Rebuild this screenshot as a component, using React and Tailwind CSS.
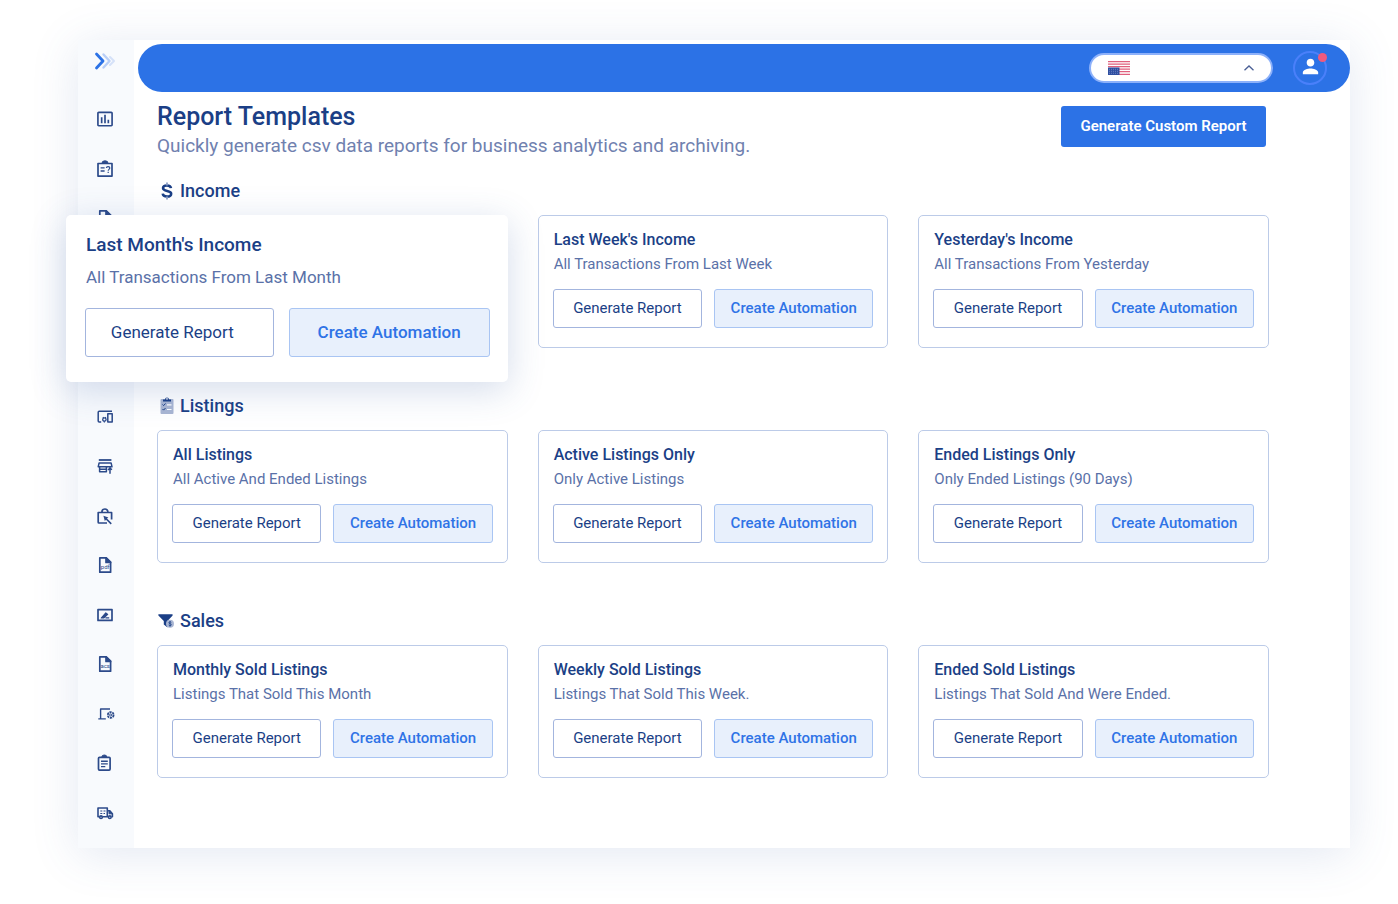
import React from "react";
import { MdInsertChartOutlined, MdPerson } from "react-icons/md";

const svgProps = {
  viewBox: "0 0 20 20",
  className: "size-5",
  fill: "none",
  stroke: "currentColor",
  strokeWidth: 1.7,
  strokeLinejoin: "round",
  "aria-hidden": true,
};

const ChartIcon = () => <MdInsertChartOutlined className="size-5" aria-hidden />;

const QuizIcon = () => (
  <svg {...svgProps}>
    <path d="M3 4.5h14v12.6H3z" />
    <path d="M7 4.2a3 2.4 0 0 1 6 0" fill="currentColor" strokeWidth="1" />
    <path d="M5.6 8.9h4M5.6 12h4" strokeWidth="1.4" />
    <path d="M11.4 9c.1-1.8 3.4-1.8 3.4.1 0 1.2-1.6 1.3-1.6 2.6M13.2 12.7v1.3" strokeWidth="1.2" />
  </svg>
);

const FileIcon = ({ label }) => (
  <svg {...svgProps}>
    <path d="M4.8 2.8h6.4l4.4 4.4v10H4.8z" />
    <path d="M11 2.8v4.6h4.6z" fill="currentColor" />
    {label ? (
      <text x="10.2" y="14" textAnchor="middle" fontSize="6" fontFamily="Roboto, sans-serif" fill="currentColor" stroke="none">
        {label}
      </text>
    ) : (
      <path d="M7.5 9.5h5M7.500 12h5" strokeWidth="1.2" />
    )}
  </svg>
);

const DevicesIcon = () => (
  <svg {...svgProps} strokeWidth="1.5">
    <path d="M17 5.200H4.200q-1 0-1 1v8.800q0 .9 1 .9h2" />
    <path d="M12.8 7.700h4.400v8.200h-4.400z" />
    <circle cx="9.400" cy="13.500" r="1.700" strokeWidth="1.300" />
    <path d="M8 11.200l.6.900M10.800 11.200l-.6.900M9.400 15.200v1.200" strokeWidth="1.200" />
  </svg>
);

const StoreIcon = () => (
  <svg {...svgProps} strokeWidth="1.500">
    <path d="M3.800 4h12.600" strokeWidth="1.800" />
    <path d="M4.100 6.900h12l.9 3.900H3.200z" />
    <path d="M4.600 10.800v5h6.800v-5M5 13.200h6" />
    <path d="M15 10.800v7M12.900 13.800l2.100-1.500 2 1.300" />
  </svg>
);

const BagIcon = () => (
  <svg {...svgProps}>
    <path d="M12 17H4q-.8 0-.8-.8V6.500h13.400v7" />
    <path d="M6.900 6.200a3 3.200 0 0 1 6 0" />
    <path d="M8.400 9.700l5 1.900-1.400 1 4.800 4.700-1.100 1.100-4.700-4.700-1.200 1.400z" fill="currentColor" stroke="none" />
  </svg>
);

const SignIcon = () => (
  <svg {...svgProps}>
    <path d="M3 4.600h14v10.800H3z" />
    <path d="M6.200 13l4.600-5.200 1.900 1.600L8.700 13zM10.500 12.900h3.700" fill="currentColor" strokeWidth="1.100" />
  </svg>
);

const LaptopIcon = () => (
  <svg {...svgProps} strokeWidth="1.400">
    <path d="M15 5H5.600v9.500M3.300 14.900h7.500" />
    <circle cx="15.700" cy="11" r="2.900" strokeWidth="1.800" strokeDasharray="2.300 .7" />
    <circle cx="15.700" cy="11" r="1.100" strokeWidth="1" />
  </svg>
);

const ClipboardIcon = () => (
  <svg {...svgProps}>
    <rect x="3.500" y="4.300" width="11.600" height="12.800" rx="1" />
    <path d="M6.800 4a2.500 2 0 0 1 5 0" fill="currentColor" strokeWidth="1" />
    <path d="M6 8.200h6.800M6 10.900h6.800M6 13.600h4.300" strokeWidth="1.400" />
  </svg>
);

const TruckIcon = () => (
  <svg {...svgProps} strokeWidth="1.600">
    <path d="M4.500 13.800H3V5h9.300v8.800H7.500M12.300 7.800h2.500l2.600 3v3h-1M11.800 13.800h1.500" />
    <path d="M14 8v2.800h3.200z" fill="currentColor" strokeWidth="1" />
    <path d="M5.300 8h2M8.500 8h2M5.300 10.500h2M8.500 10.500h1.500" strokeWidth="1" />
    <circle cx="6" cy="14.200" r="1.300" />
    <circle cx="14.800" cy="14.200" r="1.300" />
  </svg>
);

const navItems = [
  ["Overview", <ChartIcon />],
  ["Quizzes", <QuizIcon />],
  ["Documents", <FileIcon />],
  ["Signatures", <SignIcon />],
  ["Files", <FileIcon />],
  ["Lists", <ClipboardIcon />],
  ["Devices", <DevicesIcon />],
  ["Store", <StoreIcon />],
  ["Orders", <BagIcon />],
  ["PDF files", <FileIcon label="pdf" />],
  ["Sign", <SignIcon />],
  ["Data files", <FileIcon label="acs" />],
  ["System", <LaptopIcon />],
  ["Tasks", <ClipboardIcon />],
  ["Shipping", <TruckIcon />],
];

const DollarIcon = () => (
  <svg viewBox="0 0 16 20" className="h-5 w-4" fill="none" stroke="#1b3f86" aria-hidden="true">
    <path d="M13 7.200C12.800 5.500 11.300 4.500 9 4.500 6.600 4.500 5 5.500 5 7.100c0 4 8.200 1.700 8.200 5.600 0 1.900-1.700 2.900-4.200 2.900s-4.100-1.100-4.300-2.900" strokeWidth="2.500" />
    <path d="M9 1.500v3M9 15.500v3" stroke="#8d9fc6" strokeWidth="1.800" />
  </svg>
);

const ListIcon = () => (
  <svg viewBox="0 0 16 20" className="h-5 w-4" fill="none" aria-hidden="true">
    <rect x="2.500" y="3" width="13" height="15" rx="1" fill="#a9b6d3" />
    <path d="M5 5.500V3.400h2a2 2 0 0 1 4 0h2v2.100z" fill="#1b3f86" />
    <circle cx="9" cy="2.900" r=".8" fill="#fff" />
    <path d="M4.500 8.500l1.100 1.100 1.900-2.100M4.500 13l1.100 1.100L7.500 12" stroke="#1b3f86" />
    <path d="M9 8.800h4.500M9 13.500h4.500" stroke="#fff" strokeWidth="1.200" />
  </svg>
);

const FunnelIcon = () => (
  <svg viewBox="0 0 16 20" className="h-5 w-4" aria-hidden="true">
    <path d="M.6 3.200h13.800q.7.8 0 1.500L9.500 10v6.500L5.800 13.500V10L.4 4.500q-.4-.7.2-1.300z" fill="#1b3f86" />
    <circle cx="12" cy="12.800" r="4" fill="#a9b6d3" />
    <path d="M13.300 11.500c-.4-.9-2.500-.8-2.500.3 0 1.300 2.600.6 2.600 2 0 1.100-2.300 1.200-2.700.2M12 10.100v5.500" fill="none" stroke="#1b3f86" strokeWidth=".8" />
  </svg>
);

const sections = [
  {
    name: "Income",
    icon: <DollarIcon />,
    cards: [
      { title: "Last Month's Income", text: "All Transactions From Last Month", raised: true },
      { title: "Last Week's Income", text: "All Transactions From Last Week" },
      { title: "Yesterday's Income", text: "All Transactions From Yesterday" },
    ],
  },
  {
    name: "Listings",
    icon: <ListIcon />,
    cards: [
      { title: "All Listings", text: "All Active And Ended Listings" },
      { title: "Active Listings Only", text: "Only Active Listings" },
      { title: "Ended Listings Only", text: "Only Ended Listings (90 Days)" },
    ],
  },
  {
    name: "Sales",
    icon: <FunnelIcon />,
    cards: [
      { title: "Monthly Sold Listings", text: "Listings That Sold This Month" },
      { title: "Weekly Sold Listings", text: "Listings That Sold This Week." },
      { title: "Ended Sold Listings", text: "Listings That Sold And Were Ended." },
    ],
  },
];

function Card({ title, text }) {
  return (
    <article className="rounded-[5px] border border-[#bccbe8] bg-white px-3.5 pt-3 pb-[19px]">
      <h3 className="pl-px text-base leading-6 font-medium text-[#1b3f86]">{title}</h3>
      <p className="pl-px text-[15px] leading-6 text-[#5a71a8]">{text}</p>
      <div className="mt-[13px] flex gap-3 text-[15px]">
        <button className="h-[39px] flex-[15] rounded-[3px] border border-[#a3b5de] bg-white whitespace-nowrap text-[#1b3f86]">
          Generate Report
        </button>
        <button className="h-[39px] flex-[16] rounded-[3px] border border-[#a9c5f3] bg-[#e8f0fc] font-medium whitespace-nowrap text-[#2f73e6]">
          Create Automation
        </button>
      </div>
    </article>
  );
}

function RaisedCard({ title, text }) {
  return (
    <div className="relative">
      <article className="absolute top-0 right-0 -left-[91px] z-10 rounded-[5px] bg-white pt-4 pr-[18px] pb-[25px] pl-[19px] shadow-[0_8px_36px_rgba(60,95,165,0.22)]">
        <h3 className="pl-px text-[19px] leading-7 font-medium text-[#1b3f86]">{title}</h3>
        <p className="mt-1.5 pl-px text-[17px] leading-6 text-[#5a71a8]">{text}</p>
        <div className="mt-[19px] flex gap-[15px] text-[17px]">
          <button className="h-[49px] flex-[15] rounded-[3px] border border-[#a3b5de] bg-white whitespace-nowrap text-[#1b3f86]">
            <span className="pr-3.5">Generate Report</span>
          </button>
          <button className="h-[49px] flex-[16] rounded-[3px] border border-[#a9c5f3] bg-[#e8f0fc] font-medium whitespace-nowrap text-[#2f73e6]">
            Create Automation
          </button>
        </div>
      </article>
    </div>
  );
}

function Flag() {
  return (
    <svg viewBox="0 0 22 14" className="pointer-events-none absolute left-[19px] h-3.5 w-[22px]" aria-hidden="true">
      <path fill="#fff" d="M0 0h22v14H0z" />
      <path stroke="#e0607e" strokeWidth="1.300" d="M0 .7h22M0 3.200h22M0 5.700h22M11 8.200h11M11 10.700h11M0 13.300h22" />
      <path fill="#2f4fa0" d="M0 6.500h11.500V14H0z" />
      <path stroke="#8fa3d6" strokeWidth=".6" strokeDasharray="1 1" d="M1 8.300h10M1 10.300h10M1 12.300h10" />
    </svg>
  );
}

function TopBar() {
  return (
    <header className="ml-1 flex h-12 items-center justify-end gap-5 rounded-full bg-[#2c72e6] pr-[23px]">
      <div className="relative flex items-center">
        <select
          aria-label="Language"
          className="h-[30px] w-[184px] appearance-none rounded-full border-2 border-[#8db1fa] bg-white"
        >
          <option value="en-US" aria-label="English (US)"></option>
        </select>
        <Flag />
        <svg viewBox="0 0 12 8" className="pointer-events-none absolute right-[18px] h-2 w-3" fill="none" stroke="#4a5f95" strokeWidth="1.300" aria-hidden="true">
          <path d="M1.500 6.300L6 2l4.500 4.300" />
        </svg>
      </div>
      <button aria-label="Account" className="relative flex size-[34px] items-center justify-center rounded-full border-2 border-[#4a80fa] pb-1 text-white">
        <MdPerson className="size-[23px]" aria-hidden />
        <span className="absolute top-0 -right-0.5 size-[9px] rounded-full bg-[#f05a7e]" />
      </button>
    </header>
  );
}

export default function App() {
  return (
    <div className="min-h-screen bg-white pt-10 pr-12 pb-14 pl-[78px] font-['Roboto',sans-serif]">
      <div className="flex bg-white shadow-[0_6px_44px_rgba(70,100,170,0.15)]">
        <nav aria-label="Main" className="flex w-14 shrink-0 flex-col items-center bg-[#f8fafd] pt-3 pr-0.5 pb-[25px] text-[#2c4a8a]">
          <a href="#home" aria-label="Home">
            <svg viewBox="0 0 22 18" className="h-[18px] w-[22px]" fill="none" strokeLinecap="round" strokeLinejoin="round" aria-hidden="true">
              <path d="M16 5l4 4-4 4" stroke="#d5e1f8" strokeWidth="2" />
              <path d="M9.500 2.500L15.500 9l-6 6.500" stroke="#b9cff7" strokeWidth="2.400" />
              <path d="M2.500 2L9 9l-6.500 7" stroke="#2c72e6" strokeWidth="2.800" />
            </svg>
          </a>
          <ul className="mt-[39px] flex flex-1 flex-col justify-between">
            {navItems.map(([name, icon]) => (
              <li key={name}>
                <a href="#section" aria-label={name} className="block">
                  {icon}
                </a>
              </li>
            ))}
          </ul>
        </nav>
        <div className="min-w-0 flex-1 pt-1">
          <TopBar />
          <main className="pr-[81px] pb-[70px] pl-[23px]">
            <div className="flex items-start justify-between pt-2">
              <div>
                <h1 className="text-[25px] leading-[34px] font-medium text-[#1b3f86]">Report Templates</h1>
                <p className="text-[19px] leading-6 text-[#7081af]">
                  Quickly generate csv data reports for business analytics and archiving.
                </p>
              </div>
              <button className="mt-1.5 mr-[3px] h-[41px] w-[205px] rounded-[3px] bg-[#2c72e6] text-[15px] font-semibold text-white">
                Generate Custom Report
              </button>
            </div>
            <div className="mt-[21px] flex flex-col gap-[46px]">
              {sections.map((section) => (
                <section key={section.name}>
                  <h2 className="flex items-center gap-1.5 pl-px text-lg leading-6 font-medium text-[#1b3f86]">
                    {section.icon}
                    {section.name}
                  </h2>
                  <div className="mt-3 grid min-h-[133px] grid-cols-3 gap-[30px]">
                    {section.cards.map((card) =>
                      card.raised ? <RaisedCard key={card.title} {...card} /> : <Card key={card.title} {...card} />
                    )}
                  </div>
                </section>
              ))}
            </div>
          </main>
        </div>
      </div>
    </div>
  );
}
